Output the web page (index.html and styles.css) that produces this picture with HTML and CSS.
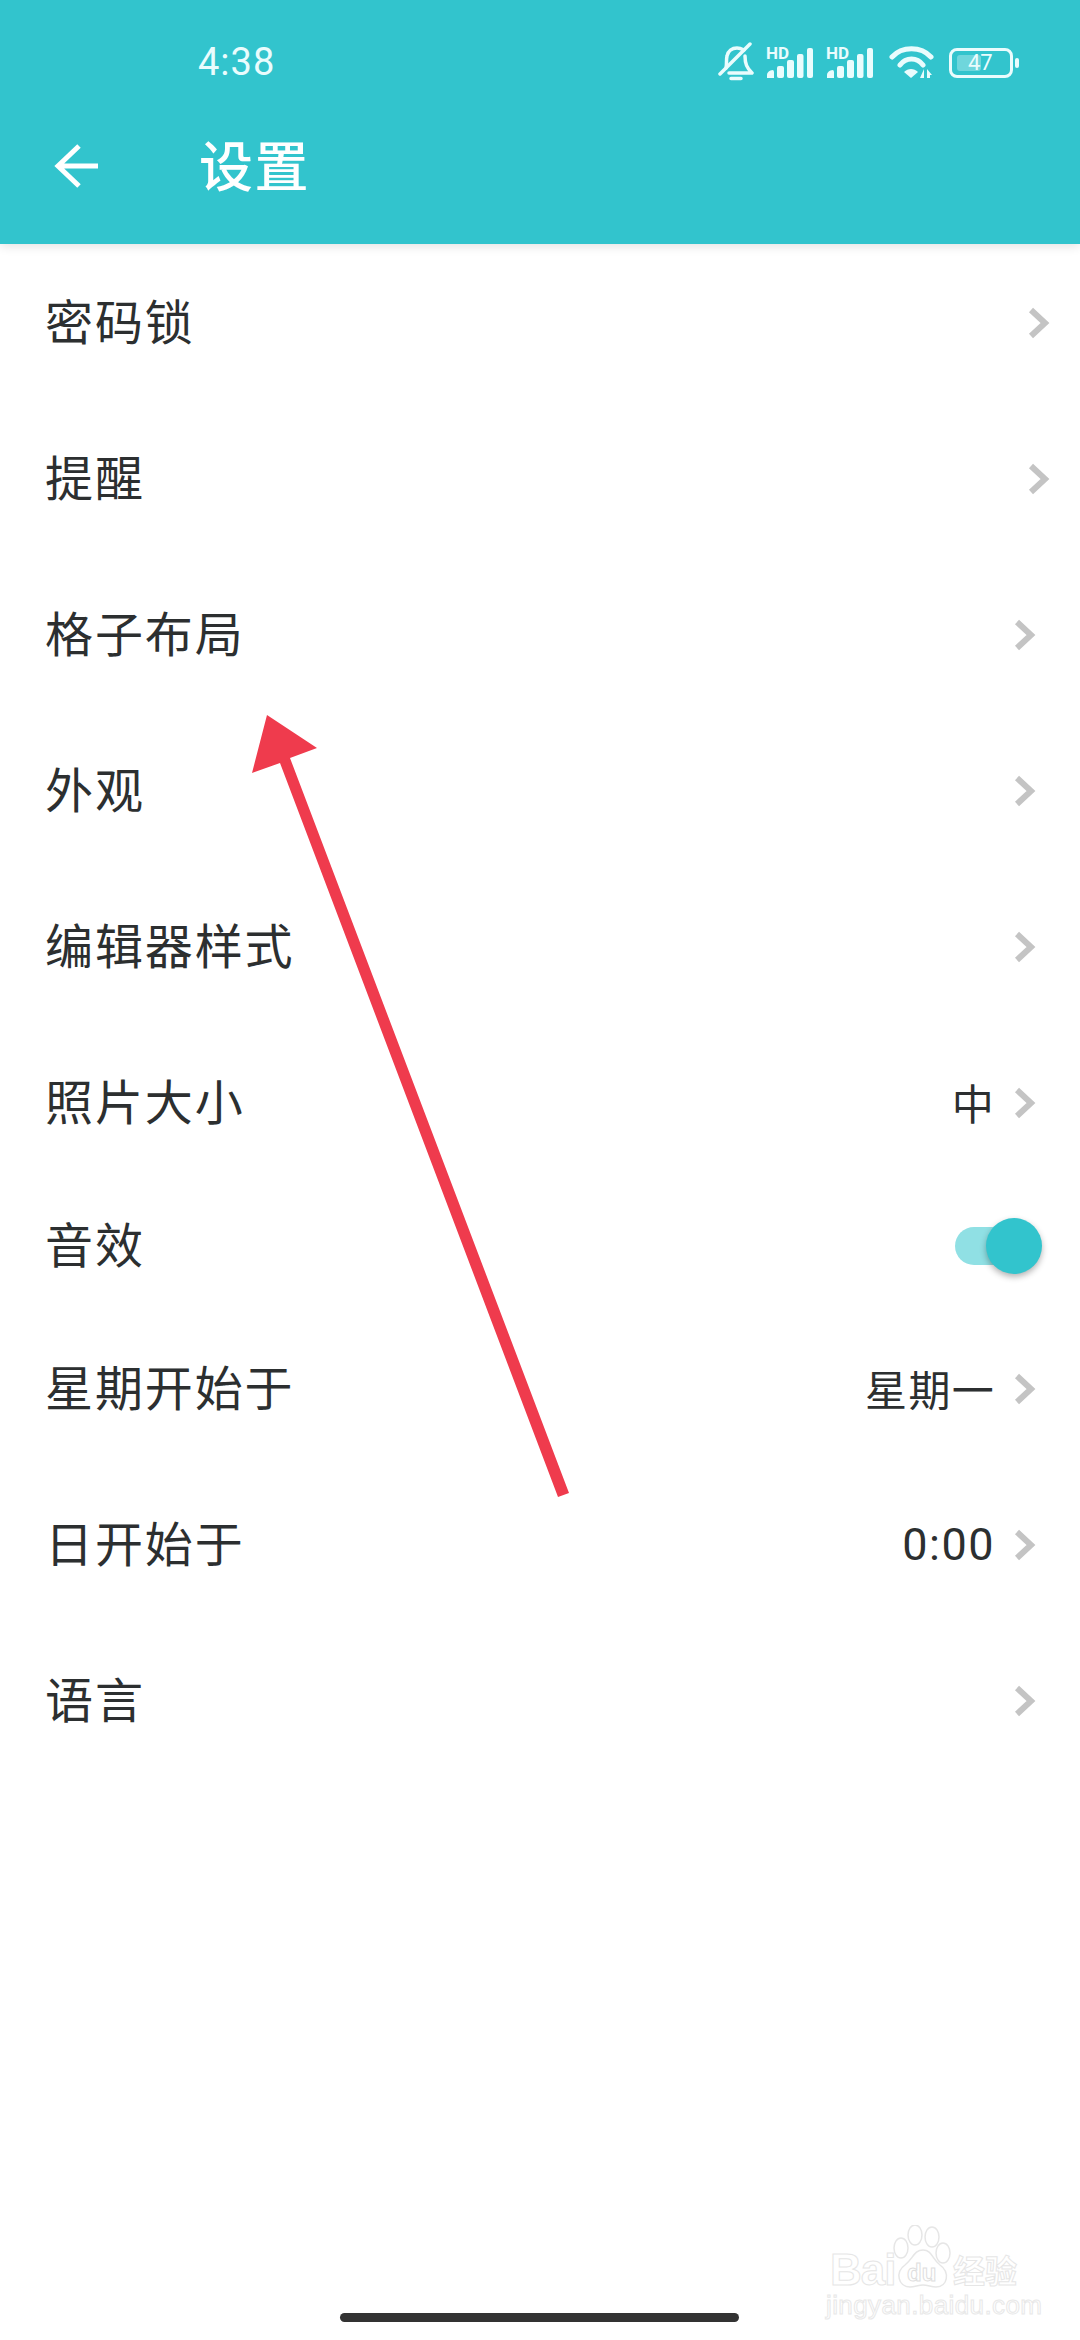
FILE: index.html
```html
<!DOCTYPE html>
<html lang="zh">
<head>
<meta charset="utf-8">
<title>设置</title>
<link rel="stylesheet" href="styles.css">
</head>
<body>
<div class="page">
  <header class="header">
    <div class="status">
      <span class="time">4:38</span>
      <div class="status-icons">
        <svg class="ic-bell" width="36" height="40" viewBox="0 0 36 40"><path d="M8 26C9 22 8 18 9 14 10 9 14 6 19 6 22 6 24 7 26 8M27 14C27 22 29 26 34 31H11M13 36.500H23" fill="none" stroke="#eafcfd" stroke-width="3.500" stroke-linecap="round" stroke-linejoin="round"/><path d="M2 32 32 2" stroke="#eafcfd" stroke-width="3.500" stroke-linecap="round"/></svg>
        <div class="sig">
          <span class="hd">HD</span>
          <svg width="50" height="30" viewBox="0 0 50 30"><g fill="#eafcfd"><path d="M1 30v-3q0-3 3.500-4.500Q8 21 8 24v6z"/><rect x="11" y="18" width="7" height="12" rx="2"/><rect x="21" y="12" width="7" height="18" rx="2"/><rect x="31" y="6" width="6.500" height="24" rx="2"/><rect x="41" y="0" width="6" height="30" rx="2"/></g></svg>
        </div>
        <div class="sig">
          <span class="hd">HD</span>
          <svg width="50" height="30" viewBox="0 0 50 30"><g fill="#eafcfd"><path d="M1 30v-3q0-3 3.500-4.500Q8 21 8 24v6z"/><rect x="11" y="18" width="7" height="12" rx="2"/><rect x="21" y="12" width="7" height="18" rx="2"/><rect x="31" y="6" width="6.500" height="24" rx="2"/><rect x="41" y="0" width="6" height="30" rx="2"/></g></svg>
        </div>
        <svg class="ic-wifi" width="46" height="32" viewBox="0 0 46 32"><g fill="none" stroke="#eafcfd" stroke-width="5" stroke-linecap="round"><path d="M3 11C13 0 32 0 42 11"/><path d="M11 19C17 11 28 11 34 19"/></g><path d="M15 26c4-4 10-4 14 0l-7 6z" fill="#eafcfd"/><path d="M35 23v9h-4zM38 32v-9l5 6h-2v3z" fill="#eafcfd"/></svg>
        <div class="battery">
          <div class="bat-body"><span class="bat-fill"></span><span class="bat-num">47</span></div>
          <span class="bat-tip"></span>
        </div>
      </div>
    </div>
    <div class="toolbar">
      <svg class="back" width="46" height="46" viewBox="0 0 46 46"><path d="M44 23H4M25 3 4 23l21 20" fill="none" stroke="#fff" stroke-width="5"/></svg>
      <h1 class="title">设置</h1>
    </div>
  </header>

  <main class="list">
    <div class="row"><span class="label">密码锁</span><svg class="chev chev-far" width="22" height="32" viewBox="0 0 22 32"><path d="M3 3 17 16 3 29" fill="none" stroke="#c4c4c4" stroke-width="6"/></svg></div>
    <div class="row"><span class="label">提醒</span><svg class="chev chev-far" width="22" height="32" viewBox="0 0 22 32"><path d="M3 3 17 16 3 29" fill="none" stroke="#c4c4c4" stroke-width="6"/></svg></div>
    <div class="row"><span class="label">格子布局</span><svg class="chev" width="22" height="32" viewBox="0 0 22 32"><path d="M3 3 17 16 3 29" fill="none" stroke="#c4c4c4" stroke-width="6"/></svg></div>
    <div class="row"><span class="label">外观</span><svg class="chev" width="22" height="32" viewBox="0 0 22 32"><path d="M3 3 17 16 3 29" fill="none" stroke="#c4c4c4" stroke-width="6"/></svg></div>
    <div class="row"><span class="label">编辑器样式</span><svg class="chev" width="22" height="32" viewBox="0 0 22 32"><path d="M3 3 17 16 3 29" fill="none" stroke="#c4c4c4" stroke-width="6"/></svg></div>
    <div class="row"><span class="label">照片大小</span><span class="value">中</span><svg class="chev" width="22" height="32" viewBox="0 0 22 32"><path d="M3 3 17 16 3 29" fill="none" stroke="#c4c4c4" stroke-width="6"/></svg></div>
    <div class="row row-switch"><span class="label">音效</span><div class="switch"><span class="knob"></span></div></div>
    <div class="row"><span class="label">星期开始于</span><span class="value">星期一</span><svg class="chev" width="22" height="32" viewBox="0 0 22 32"><path d="M3 3 17 16 3 29" fill="none" stroke="#c4c4c4" stroke-width="6"/></svg></div>
    <div class="row"><span class="label">日开始于</span><span class="value value-num">0:00</span><svg class="chev" width="22" height="32" viewBox="0 0 22 32"><path d="M3 3 17 16 3 29" fill="none" stroke="#c4c4c4" stroke-width="6"/></svg></div>
    <div class="row"><span class="label">语言</span><svg class="chev" width="22" height="32" viewBox="0 0 22 32"><path d="M3 3 17 16 3 29" fill="none" stroke="#c4c4c4" stroke-width="6"/></svg></div>
  </main>

  <div class="home-bar"></div>

  <svg class="annot" width="1080" height="2340" viewBox="0 0 1080 2340"><path d="M267 715 317 748 290 758 569 1493 558 1497 280 763 252 773Z" fill="#ef3b4d"/></svg>

  <div class="watermark">
    <div class="wm-top">
      <span class="wm-b">Bai</span>
      <svg class="wm-paw" width="59" height="63" viewBox="0 0 59 63"><g fill="#fff" stroke="#e6e6e6" stroke-width="1.500"><ellipse cx="8" cy="23" rx="7" ry="10"/><ellipse cx="22" cy="10" rx="7" ry="10"/><ellipse cx="39" cy="12" rx="7" ry="10"/><ellipse cx="50" cy="28" rx="7" ry="10"/><path d="M30 25C21 25 20 34 12 40 2 47 5 62 17 62 22 62 25 60 30 60S38 62 43 62C55 62 57 47 47 40 39 34 39 25 30 25Z"/></g></svg>
      <span class="wm-du">du</span>
      <span class="wm-cn">经验</span>
    </div>
    <div class="wm-url">jingyan.baidu.com</div>
  </div>
</div>
</body>
</html>
```

FILE: styles.css
```css
* { box-sizing: border-box; margin: 0; padding: 0; }
html, body { width: 1080px; height: 2340px; background: #fff; overflow: hidden; }
body { font-family: "Noto Sans CJK SC", "Noto Sans", sans-serif; color: #2c2f30; }
.page { position: relative; width: 1080px; height: 2340px; display: flex; flex-direction: column; }

.header { height: 244px; background: #32c4cd; color: #fff; box-shadow: 0 2px 10px rgba(0,0,0,.12); position: relative; z-index: 1; flex: none; }
.status { height: 104px; display: flex; align-items: center; justify-content: space-between; padding: 20px 61px 0 198px; }
.time { font-family: Roboto, sans-serif; font-weight: 400; font-size: 38px; color: #eafcfd; letter-spacing: 1px; }
.status-icons { display: flex; align-items: flex-end; height: 46px; margin-bottom: 14px; }
.ic-bell { margin-right: 12px; margin-bottom: -4px; }
.sig { position: relative; width: 50px; height: 40px; margin-right: 10px; display: flex; align-items: flex-end; }
.hd { position: absolute; left: 0; top: 6px; font: 700 17px/18px Roboto, sans-serif; color: #eafcfd; }
.ic-wifi { margin: 0 14px 0 3px; }
.battery { display: flex; align-items: center; height: 30px; }
.bat-body { position: relative; width: 64px; height: 30px; border: 3px solid #eafcfd; border-radius: 8px; }
.bat-fill { position: absolute; left: 5px; top: 4px; bottom: 4px; width: 24px; background: #6fd6dc; border-radius: 3px; }
.bat-num { position: absolute; left: 16px; top: -3px; font: 400 22px/30px Roboto, sans-serif; color: #eafcfd; }
.bat-tip { width: 4px; height: 10px; background: #eafcfd; margin-left: 2px; border-radius: 2px; }
.toolbar { display: flex; align-items: center; height: 124px; padding-left: 54px; }
.back { flex: none; }
.title { font-size: 54px; font-weight: 500; margin-left: 99px; line-height: 1; letter-spacing: 1.500px; position: relative; top: -2px; }

.list { flex: none; }
.row { display: flex; align-items: center; height: 156px; padding-left: 45px; padding-right: 44px; }
.row-switch { height: 130px; padding-right: 52px; }
.label { font-size: 48px; letter-spacing: 1.900px; flex: 1; line-height: 1; margin-bottom: 6px; }
.value { font-size: 42px; letter-spacing: 1.300px; margin-right: 19px; line-height: 1; }
.value-num { font-family: Roboto, sans-serif; font-size: 45px; letter-spacing: 1.500px; }
.chev { flex: none; margin-top: 1px; }
.chev-far { margin-right: -14px; }
.switch { position: relative; top: 1px; width: 73px; height: 38px; background: #90e0e4; border-radius: 19px; }
.knob { position: absolute; right: -14px; top: -9px; width: 56px; height: 56px; border-radius: 50%; background: #32c4cd; box-shadow: 0 3px 6px rgba(0,0,0,.3); }

.home-bar { position: absolute; left: 340px; bottom: 18px; width: 399px; height: 9px; border-radius: 5px; background: #333; }
.annot { position: absolute; left: 0; top: 0; z-index: 2; pointer-events: none; }

.watermark { position: absolute; left: 826px; top: 2224px; width: 210px; z-index: 2; color: #fff; }
.wm-top { position: relative; height: 68px; }
.wm-b { position: absolute; left: 4px; bottom: 0; font: 700 44px/44px "Liberation Sans", sans-serif; color: #fff; -webkit-text-stroke: 1px #e6e6e6; letter-spacing: -1px; }
.wm-cn { position: absolute; left: 127px; bottom: 3px; font: 700 32px/40px "Noto Sans CJK SC", sans-serif; color: #fff; -webkit-text-stroke: 1px #e6e6e6; }
.wm-paw { position: absolute; left: 67px; top: 1px; }
.wm-du { position: absolute; left: 81px; bottom: 6px; font: 700 24px/26px "Liberation Sans", sans-serif; color: #fff; -webkit-text-stroke: 1px #dedede; }
.wm-url { font: 400 26px/30px "Liberation Sans", sans-serif; color: #fff; -webkit-text-stroke: 1px #e8e8e8; margin-top: -2px; white-space: nowrap; letter-spacing: .4px; }
```
